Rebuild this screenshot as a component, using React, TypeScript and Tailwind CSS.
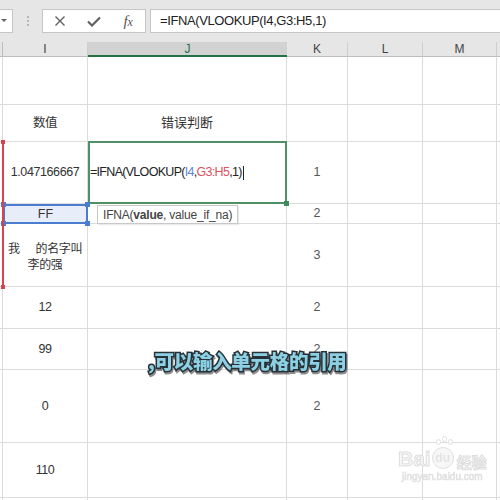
import React from 'react';

const SANS = "font-['Liberation_Sans',Arial,sans-serif]";
const CJK = "font-['Liberation_Sans','Noto_Sans_CJK_SC',sans-serif]";

const colWidths = 'grid-cols-[3px_85px_199px_61px_75px_74px_1fr]';
const rowHeights = 'grid-rows-[48px_37px_62px_20px_63px_42px_41px_73px_55px_20px]';

interface Row {
  i?: React.ReactNode;
  j?: React.ReactNode;
  k?: string;
}

const rows: Row[] = [
  {},
  { i: <span className={CJK}>数值</span>, j: <span className={CJK}>错误判断</span> },
  { i: '1.047166667', k: '1' },
  { i: 'FF', k: '2' },
  {
    i: (
      <span className={`${CJK} flex flex-col items-center leading-[16px] text-[12px] pt-[4px]`}>
        <span className="flex">
          <span>我</span>
          <span className="inline-block w-[16px]" />
          <span>的名字叫</span>
        </span>
        <span>李的强</span>
      </span>
    ),
    k: '3',
  },
  { i: '12', k: '2' },
  { i: '99', k: '2' },
  { i: '0', k: '2' },
  { i: '110' },
  {},
];

const Corner = ({ className }: { className: string }) => (
  <span className={`absolute w-[5px] h-[5px] ${className}`} />
);

const Toolbar = () => (
  <div className="h-[42px] bg-[#e6e6e6] flex items-start pt-[9px]">
    {/* name box edge */}
    <div className="w-[13px] h-[24px] bg-white border border-[#c6c6c6] border-l-0 flex items-center justify-start pl-[1px]">
      <svg width="6" height="4" viewBox="0 0 6 4">
        <path d="M0 0 L6 0 L3 3 Z" fill="#666" />
      </svg>
    </div>
    <div className="w-[29px] h-[24px] flex flex-col items-center justify-center gap-[2px]">
      <span className="w-[2px] h-[2px] bg-[#b5b5b5]" />
      <span className="w-[2px] h-[2px] bg-[#b5b5b5]" />
      <span className="w-[2px] h-[2px] bg-[#b5b5b5]" />
    </div>
    <div className="w-[104px] h-[24px] bg-white border border-[#c6c6c6] flex items-center">
      <div className="w-[34px] flex justify-center">
        <svg width="12" height="12" viewBox="0 0 12 12">
          <path d="M1.5 1.5 L10.5 10.5 M10.5 1.5 L1.5 10.5" stroke="#606060" strokeWidth="1.4" />
        </svg>
      </div>
      <div className="w-[35px] flex justify-center">
        <svg width="14" height="11" viewBox="0 0 14 11">
          <path d="M1 5.5 L5 9.5 L13 1.5" stroke="#606060" strokeWidth="2.2" fill="none" />
        </svg>
      </div>
      <div className="w-[34px] flex justify-center">
        <span className="font-['Liberation_Serif',serif] italic text-[15px] text-[#555] leading-none">
          f<span className="text-[12px]">x</span>
        </span>
      </div>
    </div>
    <div className="ml-[4px] flex-1 h-[24px] bg-white border border-[#c6c6c6] border-r-0 flex items-center pl-[9px]">
      <span className={`${SANS} text-[13px] tracking-[-0.4px] text-[#222]`}>=IFNA(VLOOKUP(I4,G3:H5,1)</span>
    </div>
  </div>
);

const HeaderRow = () => (
  <div className={`grid ${colWidths} h-[15px] bg-[#e6e6e6] ${SANS} text-[12px] text-[#444]`}>
    <div className="border-r border-[#bdbdbd] border-b" />
    <div className="border-r border-[#cfcfcf] border-b border-b-[#bdbdbd] flex items-center justify-center leading-none">I</div>
    <div className="bg-[#d2d2d2] border-b-2 border-[#217346] flex items-center justify-center leading-none text-[#217346]">J</div>
    <div className="border-r border-[#cfcfcf] border-b border-b-[#bdbdbd] flex items-center justify-center leading-none">K</div>
    <div className="border-r border-[#cfcfcf] border-b border-b-[#bdbdbd] flex items-center justify-center leading-none">L</div>
    <div className="border-r border-[#cfcfcf] border-b border-b-[#bdbdbd] flex items-center justify-center leading-none">M</div>
    <div className="border-b border-[#bdbdbd]" />
  </div>
);

const cell = 'border-r border-b border-[#dcdcdc] flex items-center justify-center';

const Sheet = () => (
  <div className={`relative grid ${colWidths} ${rowHeights} bg-white ${SANS} text-[12.5px] text-[#333]`}>
    {rows.map((r, idx) => {
      const isFF = idx === 3;
      const isActive = idx === 2;
      return (
        <React.Fragment key={idx}>
          <div className={cell} />
          <div
            className={
              isFF
                ? 'relative bg-[#e8eef9] border-2 border-[#4a7cd0] flex items-center justify-center z-10'
                : `${cell} tracking-[-0.4px]`
            }
          >
            {r.i}
            {isFF && (
              <>
                <Corner className="bg-[#4a7cd0] -left-[4px] -top-[4px]" />
                <Corner className="bg-[#4a7cd0] -right-[4px] -top-[4px]" />
                <Corner className="bg-[#4a7cd0] -left-[4px] -bottom-[4px]" />
                <Corner className="bg-[#4a7cd0] -right-[4px] -bottom-[4px]" />
              </>
            )}
          </div>
          <div
            className={
              isActive
                ? 'relative -mt-px border-2 border-[#4f9066] flex items-center justify-start z-10'
                : `${cell} ${idx === 1 ? 'text-[13px]' : ''}`
            }
          >
            {isActive ? (
              <>
                <span className="text-[12.5px] tracking-[-0.7px] text-[#222] flex items-center">
                  =IFNA(VLOOKUP(<span className="text-[#5b86d6]">I4</span>,<span className="text-[#e0515c]">G3:H5</span>,1)
                  <span className="ml-[1px] w-px h-[14px] bg-[#222]" />
                </span>
                <Corner className="bg-[#3f8a5a] -right-[4px] -bottom-[4px] w-[4px] h-[4px]" />
              </>
            ) : (
              r.j
            )}
          </div>
          <div className={`${cell} text-[#555]`}>{r.k}</div>
          <div className={cell} />
          <div className={cell} />
          <div className="border-b border-[#dcdcdc]" />
        </React.Fragment>
      );
    })}

    {/* range marker for G3:H5 */}
    <div className="absolute left-[2px] top-[85px] w-[2px] h-[145px] bg-[#d8434f] z-20">
      <span className="absolute -left-[1px] -top-[2px] w-[4px] h-[4px] bg-[#d8434f]" />
      <span className="absolute -left-[1px] -bottom-[2px] w-[4px] h-[4px] bg-[#d8434f]" />
    </div>

    {/* function tooltip */}
    <div className="absolute left-[97px] top-[148px] h-[19px] px-[5px] bg-white border border-[#c8c8c8] shadow-[1px_1px_1px_rgba(0,0,0,0.08)] flex items-center text-[12px] text-[#444] z-30 tracking-[-0.2px]">
      IFNA(<b className="font-bold">value</b>, value_if_na)
    </div>

    {/* caption */}
    <div className="absolute left-[148px] top-[294px] z-40 font-['Noto_Sans_CJK_SC',sans-serif] font-black text-[19.5px] leading-none text-[#8dd0e4] [-webkit-text-stroke:3px_#263238] [paint-order:stroke_fill] drop-shadow-[1px_2px_0_rgba(0,0,0,0.45)] tracking-[-0.3px]">
      ,可以输入单元格的引用
    </div>

    {/* watermark */}
    <div className="absolute left-[398px] top-[390px] z-40 flex flex-col items-center opacity-90">
      <div className="flex items-end gap-[1px]">
        <span className="font-['Liberation_Sans',sans-serif] font-bold text-[21px] leading-none text-[#f4f4f4] [-webkit-text-stroke:1px_#dcdcdc]">Bai</span>
        <span className="relative w-[22px] h-[22px] rounded-full border border-[#dcdcdc] bg-[#f7f7f7] flex items-center justify-center text-[12px] font-bold text-[#e0e0e0]">
          du
          <span className="absolute -top-[9px] left-[3px] w-[5px] h-[6px] rounded-full border border-[#dcdcdc] bg-white" />
          <span className="absolute -top-[12px] left-[9px] w-[5px] h-[6px] rounded-full border border-[#dcdcdc] bg-white" />
          <span className="absolute -top-[9px] left-[15px] w-[5px] h-[6px] rounded-full border border-[#dcdcdc] bg-white" />
        </span>
        <span className="font-['Noto_Sans_CJK_SC',sans-serif] font-bold text-[15px] leading-none text-[#f4f4f4] [-webkit-text-stroke:1px_#dcdcdc] ml-[2px]">经验</span>
      </div>
      <span className="font-['Liberation_Sans',sans-serif] text-[10px] leading-none mt-[3px] text-[#f0f0f0] [-webkit-text-stroke:0.6px_#dadada]">jingyan.baidu.com</span>
    </div>
  </div>
);

export default function App() {
  return (
    <div className="w-[500px] h-[500px] overflow-hidden bg-white">
      <Toolbar />
      <HeaderRow />
      <Sheet />
    </div>
  );
}
